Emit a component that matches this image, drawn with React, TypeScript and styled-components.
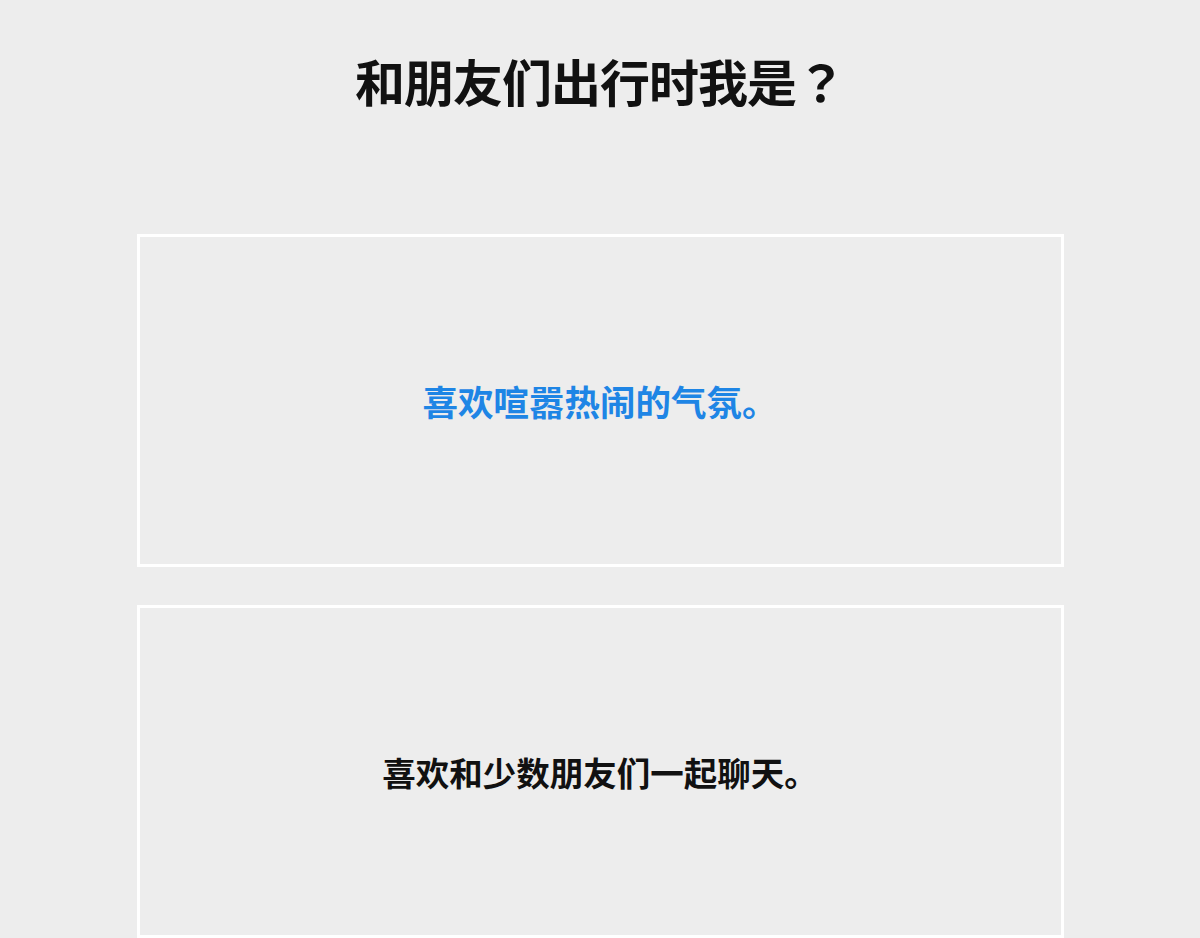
import styled, { createGlobalStyle } from "styled-components";

const GlobalStyle = createGlobalStyle`
  body {
    margin: 0;
    background: #ededed;
    font-family: "Noto Sans CJK SC", "Noto Sans", sans-serif;
  }
`;

const options = [
  { text: "喜欢喧嚣热闹的气氛。", active: true },
  { text: "喜欢和少数朋友们一起聊天。", active: false },
];

export default function App() {
  return (
    <>
      <GlobalStyle />
      <Page>
        <Question>
          和朋友们出行时我是<Mark>？</Mark>
        </Question>
        <OptionList>
          {options.map(({ text, active }) => (
            <Option key={text} $active={active}>
              {text}
            </Option>
          ))}
        </OptionList>
      </Page>
    </>
  );
}

const Page = styled.main`
  width: 927px;
  margin: 0 auto;
`;

const Question = styled.h1`
  margin: 55px 0 129px;
  font-size: 50px;
  line-height: 50px;
  letter-spacing: -1px;
  font-weight: 700;
  color: #111;
  text-align: center;
`;

// full-width question mark, centred in its em box
const Mark = styled.span`
  font-family: "Noto Sans CJK TC", "Noto Sans CJK SC", sans-serif;
`;

const OptionList = styled.ul`
  list-style: none;
  margin: 0;
  padding: 0;
  display: flex;
  flex-direction: column;
  gap: 38px;
`;

const Option = styled.li<{ $active: boolean }>`
  height: 333px;
  box-sizing: border-box;
  border: 3px solid #fff;
  display: flex;
  align-items: center;
  justify-content: center;
  font-size: ${({ $active }) => ($active ? "35.5px" : "33.5px")};
  font-weight: 700;
  color: ${({ $active }) => ($active ? "#1e85e5" : "#111")};
`;
